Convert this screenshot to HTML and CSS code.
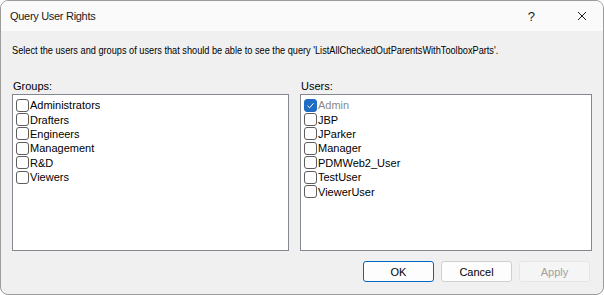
FILE: index.html
```html
<!DOCTYPE html>
<html lang="en">
<head>
  <meta charset="UTF-8">
  <title>Query User Rights</title>
  <link rel="stylesheet" href="styles.css">
</head>
<body>
  <div class="window">
    <div class="titlebar">
      <span class="title">Query User Rights</span>
      <span class="help">?</span>
      <svg class="close" width="10" height="10" viewBox="0 0 10 10">
        <path d="M1 1 L9 9 M9 1 L1 9" stroke="#1a1a1a" stroke-width="1" fill="none"/>
      </svg>
    </div>

    <div class="content">
      <div class="intro"><span>Select the users and groups of users that should be able to see the query 'ListAllCheckedOutParentsWithToolboxParts'.</span></div>

      <div class="lists">
        <div class="column">
          <div class="label">Groups:</div>
          <div class="listbox">
            <div class="item"><span class="check"></span>Administrators</div>
            <div class="item"><span class="check"></span>Drafters</div>
            <div class="item"><span class="check"></span>Engineers</div>
            <div class="item"><span class="check"></span>Management</div>
            <div class="item"><span class="check"></span>R&amp;D</div>
            <div class="item"><span class="check"></span>Viewers</div>
          </div>
        </div>
        <div class="column">
          <div class="label">Users:</div>
          <div class="listbox">
            <div class="item disabled">
              <span class="check checked">
                <svg width="9" height="9" viewBox="0 0 9 9"><path d="M1.5 4.8 L3.6 6.8 L7.6 2.2" stroke="#fff" stroke-width="1" fill="none"/></svg>
              </span>Admin
            </div>
            <div class="item"><span class="check"></span>JBP</div>
            <div class="item"><span class="check"></span>JParker</div>
            <div class="item"><span class="check"></span>Manager</div>
            <div class="item"><span class="check"></span>PDMWeb2_User</div>
            <div class="item"><span class="check"></span>TestUser</div>
            <div class="item"><span class="check"></span>ViewerUser</div>
          </div>
        </div>
      </div>

      <div class="buttons">
        <button class="btn default">OK</button>
        <button class="btn">Cancel</button>
        <button class="btn" disabled>Apply</button>
      </div>
    </div>
  </div>
</body>
</html>
```

FILE: styles.css
```css
/* Basic reset */
* {
  box-sizing: border-box;
  margin: 0;
  padding: 0;
}

body {
  background-color: #fff;
  font-family: "Liberation Sans", Arial, sans-serif;
  font-size: 11px;
  color: #000;
}

.window {
  width: 604px;
  height: 295px;
  border: 1px solid #9c9c9c;
  border-radius: 8px;
  background-color: #f0f0f0;
  overflow: hidden;
  display: flex;
  flex-direction: column;
}

.titlebar {
  height: 30px;
  background-color: #fafafa;
  display: flex;
  align-items: center;
  padding-left: 9px;
  font-size: 11px;
  color: #1a1a1a;
}

.title {
  flex: 1;
  letter-spacing: -0.3px;
}

.help {
  margin-right: 42px;
  font-size: 13px;
}

.close {
  margin-right: 16px;
}

.content {
  padding: 0 13px 0 11px;
}

/* the dialog font is narrower than anything installed, squeeze it */
.intro {
  margin-top: 13px;
  height: 34px;
  white-space: nowrap;
  font-size: 11.5px;
}

.intro span {
  display: inline-block;
  transform: scaleX(0.8);
  transform-origin: left center;
}

.lists {
  display: grid;
  grid-template-columns: 277px 292px;
  column-gap: 11px;
}

.label {
  height: 16px;
  line-height: 16px;
  padding-left: 1px;
}

.listbox {
  height: 157px;
  background-color: #fff;
  border: 1px solid #828790;
  padding: 3px 0 0 3px;
}

.item {
  height: 14.4px;
  display: flex;
  align-items: center;
}

.check {
  width: 13px;
  height: 13px;
  border: 1px solid #5d5d5d;
  border-radius: 3px;
  background-color: #fff;
  margin-right: 1px;
  display: flex;
  align-items: center;
  justify-content: center;
}

.check.checked {
  background-color: #1f6cc4;
  border-color: #1f6cc4;
}

.item.disabled {
  color: #8a8a8a;
}

.buttons {
  display: flex;
  justify-content: flex-end;
  gap: 7px;
  margin-top: 10px;
}

.btn {
  width: 71px;
  height: 21px;
  font-family: "Liberation Sans", Arial, sans-serif;
  font-size: 11px;
  color: #000;
  background-color: #fdfdfd;
  border: 1px solid #d0d0d0;
  border-radius: 3px;
}

.btn.default {
  border-color: #0067c0;
}

.btn:disabled {
  background-color: #f5f5f5;
  border-color: #e5e5e5;
  color: #a0a0a0;
}
```
